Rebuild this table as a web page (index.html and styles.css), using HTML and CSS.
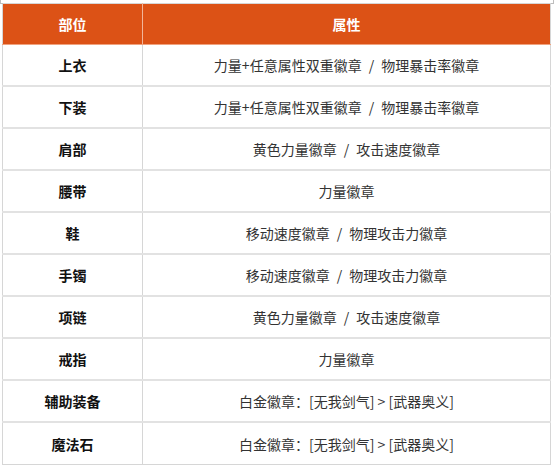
FILE: index.html
```html
<!DOCTYPE html>
<html lang="zh-CN">
<head>
<meta charset="utf-8">
<link rel="stylesheet" href="styles.css">
</head>
<body>
<div class="mark mark-tl"></div>
<div class="mark mark-tr"></div>
<table class="gear">
  <thead>
    <tr><th class="c1">部位</th><th class="c2">属性</th></tr>
  </thead>
  <tbody>
    <tr><td class="c1">上衣</td><td class="c2">力量+任意属性双重徽章<span class="sep">/</span>物理暴击率徽章</td></tr>
    <tr><td class="c1">下装</td><td class="c2">力量+任意属性双重徽章<span class="sep">/</span>物理暴击率徽章</td></tr>
    <tr><td class="c1">肩部</td><td class="c2">黄色力量徽章<span class="sep">/</span>攻击速度徽章</td></tr>
    <tr><td class="c1">腰带</td><td class="c2">力量徽章</td></tr>
    <tr><td class="c1">鞋</td><td class="c2">移动速度徽章<span class="sep">/</span>物理攻击力徽章</td></tr>
    <tr><td class="c1">手镯</td><td class="c2">移动速度徽章<span class="sep">/</span>物理攻击力徽章</td></tr>
    <tr><td class="c1">项链</td><td class="c2">黄色力量徽章<span class="sep">/</span>攻击速度徽章</td></tr>
    <tr><td class="c1">戒指</td><td class="c2">力量徽章</td></tr>
    <tr><td class="c1">辅助装备</td><td class="c2">白金徽章：[无我剑气] &gt; [武器奥义]</td></tr>
    <tr><td class="c1">魔法石</td><td class="c2">白金徽章：[无我剑气] &gt; [武器奥义]</td></tr>
  </tbody>
</table>
</body>
</html>
```
FILE: styles.css
```css
html, body {
  margin: 0;
  padding: 0;
  background: #ffffff;
}
body {
  padding: 3px 0 0 2px;
  font-family: "Noto Sans CJK SC", "Microsoft YaHei", sans-serif;
  font-size: 14px;
  position: relative;
}
.mark {
  position: absolute;
  top: 0;
  width: 2px;
  height: 3px;
  border-color: #bdbdbd;
  border-style: solid;
  border-width: 0;
}
.mark-tl { left: 0; border-left-width: 1px; border-bottom-width: 1px; }
.mark-tr { left: 551px; border-right-width: 1px; border-bottom-width: 1px; }
.gear {
  border-collapse: collapse;
  width: 549px;
  table-layout: fixed;
  border: 1px solid #d6d6d6;
}
.gear .c1 { width: 139px; }
.gear th {
  background: #dc5216;
  color: #ffffff;
  font-weight: bold;
  height: 40px;
  padding: 0;
  text-align: center;
  vertical-align: middle;
  border-bottom: 1px solid #f0a27e;
  line-height: 20px;
}
.gear th.c1 { border-right: 1px solid #f2b59a; }
.gear td {
  height: 40px;
  padding: 0;
  text-align: center;
  vertical-align: middle;
  border-bottom: 2px solid #e2e2e2;
  line-height: 20px;
}
.gear tbody tr:last-child td { border-bottom: 1px solid #d6d6d6; height: 41px; }
.gear td.c1 {
  font-weight: bold;
  color: #111111;
  border-right: 1px solid #d6d6d6;
}
.gear td.c2 {
  color: #333333;
}
.sep {
  margin: 0 7px;
}
```
